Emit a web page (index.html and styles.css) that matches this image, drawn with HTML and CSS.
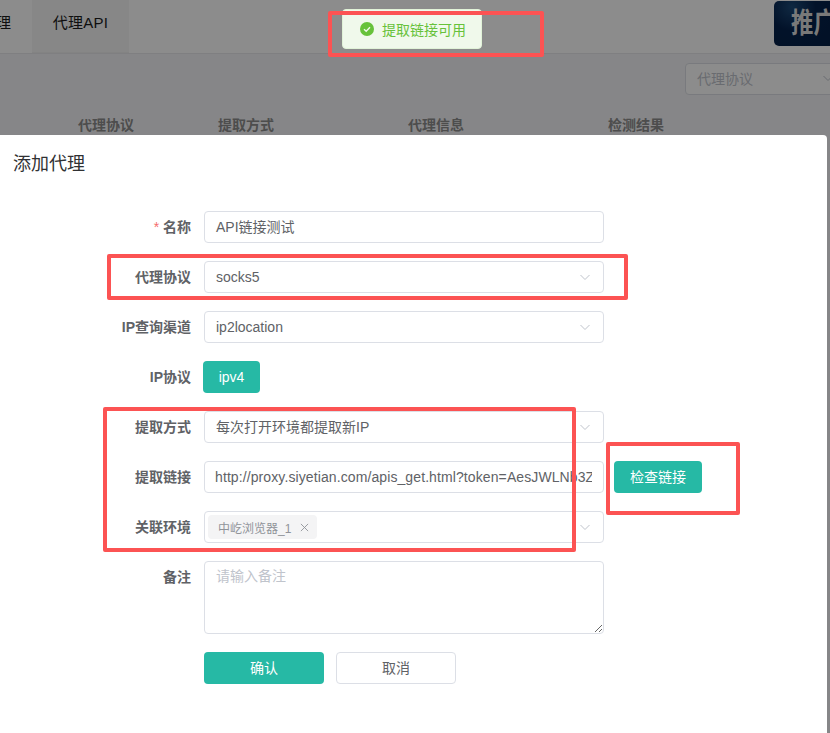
FILE: index.html
```html
<!DOCTYPE html>
<html lang="zh-CN">
<head>
<meta charset="utf-8">
<title>添加代理</title>
<link rel="stylesheet" href="styles.css">
</head>
<body>
<div class="app">
  <header class="topbar">
    <div class="tab tab-cut">理</div>
    <div class="tab tab-active">代理API</div>
    <div class="promo"><span class="promo-text">推广</span></div>
  </header>
  <div class="toolbar">
    <div class="filter"><span>代理协议</span>
      <svg class="chev" viewBox="0 0 12 12"><path d="M1.5 4 L6 8.5 L10.5 4"/></svg>
    </div>
  </div>
  <div class="table-head">
    <span>代理协议</span><span>提取方式</span><span>代理信息</span><span>检测结果</span>
  </div>
</div>

<div class="scrim"></div>

<section class="dialog">
  <h2 class="dialog-title">添加代理</h2>
  <form class="form">
    <div class="row">
      <label class="label"><i class="req">*</i> 名称</label>
      <div class="control control-cjk">API链接测试</div>
    </div>
    <div class="row">
      <label class="label">代理协议</label>
      <div class="control select"><span>socks5</span>
        <svg class="chev" viewBox="0 0 12 12"><path d="M1.5 4 L6 8.5 L10.5 4"/></svg>
      </div>
    </div>
    <div class="row">
      <label class="label">IP查询渠道</label>
      <div class="control select"><span>ip2location</span>
        <svg class="chev" viewBox="0 0 12 12"><path d="M1.5 4 L6 8.5 L10.5 4"/></svg>
      </div>
    </div>
    <div class="row">
      <label class="label">IP协议</label>
      <button type="button" class="btn btn-primary btn-ipv">ipv4</button>
    </div>
    <div class="row">
      <label class="label">提取方式</label>
      <div class="control select control-cjk"><span>每次打开环境都提取新IP</span>
        <svg class="chev" viewBox="0 0 12 12"><path d="M1.5 4 L6 8.5 L10.5 4"/></svg>
      </div>
    </div>
    <div class="row">
      <label class="label">提取链接</label>
      <input class="control link-input" readonly value="http://proxy.siyetian.com/apis_get.html?token=AesJWLNb3ZqRjTn1STqFUeORVQ">
      <button type="button" class="btn btn-primary btn-check">检查链接</button>
    </div>
    <div class="row">
      <label class="label">关联环境</label>
      <div class="control select select-tags">
        <span class="tag">中屹浏览器_1
          <svg class="tag-x" viewBox="0 0 10 10"><path d="M1 1 L9 9 M9 1 L1 9"/></svg>
        </span>
        <svg class="chev" viewBox="0 0 12 12"><path d="M1.5 4 L6 8.5 L10.5 4"/></svg>
      </div>
    </div>
    <div class="row row-top">
      <label class="label">备注</label>
      <textarea class="control note" placeholder="请输入备注"></textarea>
    </div>
    <div class="row actions">
      <button type="button" class="btn btn-primary btn-wide">确认</button>
      <button type="button" class="btn btn-plain btn-wide">取消</button>
    </div>
  </form>
</section>

<div class="toast">
  <svg class="toast-icon" viewBox="0 0 14 14"><circle cx="7" cy="7" r="7" fill="#67c23a"/><path d="M4 7.2 L6.2 9.2 L10 5.2" fill="none" stroke="#f0f9eb" stroke-width="1.4"/></svg>
  <span>提取链接可用</span>
</div>

<div class="mark mark-toast"></div>
<div class="mark mark-protocol"></div>
<div class="mark mark-extract"></div>
<div class="mark mark-check"></div>
</body>
</html>
```

FILE: styles.css
```css
* { box-sizing: border-box; }

html, body {
  margin: 0;
  height: 733px;
  overflow: hidden;
}

body {
  position: relative;
  font-family: "Liberation Sans", "Noto Sans CJK SC", sans-serif;
  font-size: 14px;
  color: #606266;
  background: #f5f5f7;
}

/* page behind the dialog */
.topbar {
  display: flex;
  height: 54px;
  background: #fff;
  border-bottom: 1px solid #e8e8ec;
  overflow: hidden;
}

.tab {
  height: 53px;
  line-height: 45px;
  font-size: 15px;
  color: #1c1c1c;
  text-align: center;
}

.tab-cut {
  width: 32px;
  padding-right: 21px;
  white-space: nowrap;
  direction: rtl;
}

.tab-active {
  width: 97px;
  letter-spacing: .3px;
  background: #f6f6f6;
  border-bottom: 1px solid #eee;
}

.promo {
  margin: 1px -30px 0 auto;
  width: 86px;
  height: 45px;
  padding-left: 17px;
  border-radius: 5px;
  background: radial-gradient(circle at 18px 6px, #1c4a78 0, #05224c 30%, #041c40 100%);
  color: #ddd;
  font-size: 28px;
  font-weight: 700;
  line-height: 45px;
  white-space: nowrap;
}

.promo-text {
  display: inline-block;
  transform: scaleX(.8);
  transform-origin: left center;
}

.toolbar {
  display: flex;
  justify-content: flex-end;
  padding-top: 9px;
  margin-right: -15px;
}

.filter {
  display: flex;
  align-items: center;
  justify-content: space-between;
  width: 160px;
  height: 32px;
  padding: 0 10px 2px 11px;
  background: #fff;
  border: 1px solid #dcdfe6;
  border-radius: 4px;
  color: #c0c4cc;
}

.table-head {
  display: grid;
  grid-template-columns: 140px 190px 200px 100px;
  padding: 21px 0 0 78px;
  font-weight: 700;
  line-height: 18px;
  color: #8c8c8c;
}

.scrim {
  position: absolute;
  inset: 0;
  background: rgba(0, 0, 0, .45);
}

/* dialog */
.dialog {
  position: absolute;
  left: -4px;
  top: 135px;
  width: 831px;
  height: 598px;
  background: #fff;
  border-radius: 4px 4px 0 0;
  padding: 16px 0 0 17px;
}

.dialog-title {
  margin: 0;
  padding-top: 1px;
  font-size: 18px;
  font-weight: 400;
  line-height: 24px;
  color: #303133;
}

.form {
  display: flex;
  flex-direction: column;
  gap: 18px;
  margin-top: 35px;
}

.row {
  display: flex;
  align-items: center;
  height: 32px;
}

.row-top {
  height: 73px;
  align-items: flex-start;
}

.actions {
  padding-left: 191px;
  gap: 12px;
}

.label {
  width: 178px;
  margin-right: 13px;
  text-align: right;
  font-weight: 700;
  color: #606266;
  line-height: 32px;
}

.req {
  font-style: normal;
  font-weight: 400;
  color: #f56c6c;
}

.control {
  display: flex;
  align-items: center;
  width: 400px;
  height: 32px;
  padding: 0 11px;
  background: #fff;
  border: 1px solid #dcdfe6;
  border-radius: 4px;
  font: inherit;
  color: #606266;
  outline: none;
}

.control-cjk { padding-bottom: 2px; }

.select { justify-content: space-between; padding-right: 12px; }

.select-tags { padding-left: 3px; }

.chev {
  width: 12px;
  height: 12px;
  flex: none;
  fill: none;
  stroke: #c0c4cc;
  stroke-width: 1;
}

.control-cjk .chev { margin-top: 2px; }

.tag {
  display: flex;
  align-items: center;
  gap: 9px;
  width: 109px;
  height: 24px;
  padding: 0 8px 0 10px;
  background: #f4f4f5;
  border-radius: 4px;
  font-size: 12px;
  white-space: nowrap;
  color: #909399;
}

.tag-x {
  width: 9px;
  height: 9px;
  flex: none;
  fill: none;
  stroke: #909399;
  stroke-width: 1;
}

.link-input {
  padding: 0 11px 0 10px;
  letter-spacing: .1px;
  text-overflow: clip;
}

.note {
  display: block;
  height: 73px;
  padding: 4px 11px;
  line-height: 21px;
  resize: vertical;
}

.note::placeholder { color: #c0c4cc; }

.btn {
  height: 32px;
  padding: 0 0 2px;
  border-radius: 4px;
  border: 1px solid transparent;
  font: inherit;
}

.btn-primary { background: #26b9a5; color: #fff; }

.btn-plain { background: #fff; border-color: #dcdfe6; color: #606266; }

.btn-ipv { width: 57px; margin-left: -1px; padding: 0; }

.btn-check { width: 88px; margin-left: 10px; }

.btn-wide { width: 120px; }

/* message */
.toast {
  position: absolute;
  left: 342px;
  top: 9px;
  width: 140px;
  height: 40px;
  display: flex;
  align-items: center;
  gap: 8px;
  padding-left: 17px;
  background: #f0f9eb;
  border: 1px solid #e1f3d8;
  border-radius: 4px;
  color: #67c23a;
}

.toast-icon { width: 14px; height: 14px; flex: none; }

/* annotations drawn on the screenshot */
.mark {
  position: absolute;
  border: 4px solid #fc5353;
  border-radius: 2px;
}

.mark-toast { left: 328px; top: 11px; width: 216px; height: 46px; }
.mark-protocol { left: 107px; top: 254px; width: 521px; height: 46px; }
.mark-extract { left: 103px; top: 407px; width: 473px; height: 145px; }
.mark-check { left: 606px; top: 442px; width: 134px; height: 73px; }
```
